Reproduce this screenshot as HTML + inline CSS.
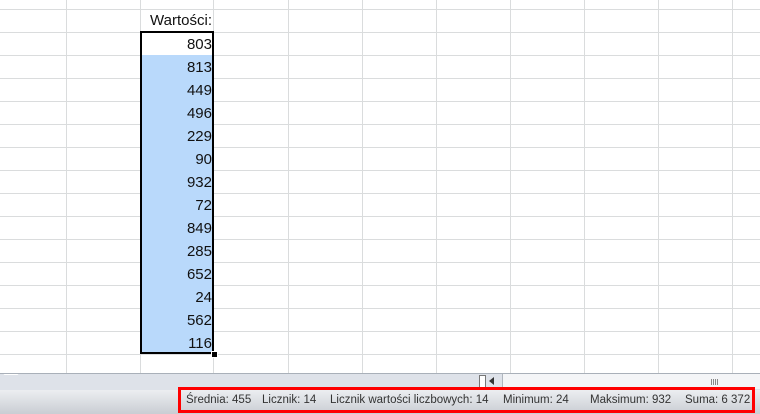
<!DOCTYPE html>
<html><head><style>
body{margin:0;width:760px;height:414px;overflow:hidden;background:#fff;position:relative;font-family:"Liberation Sans",sans-serif}
.v{position:absolute;top:0;height:373px;width:1px;background:#dadcdd}
.h{position:absolute;left:0;width:760px;height:1px;background:#dadcdd}
.c{position:absolute;left:142px;width:70px;height:23px;text-align:right;font-size:15px;line-height:24px;color:#111}
#sel{position:absolute;left:140px;top:31px;width:70px;height:319px;border:2px solid #000}
#tabs{position:absolute;left:0;top:373px;width:760px;height:16px;background:#dee2e9;border-top:1px solid #a9b0b9;border-bottom:1px solid #a0a8b2}
#status{position:absolute;left:0;top:390px;width:760px;height:24px;background:linear-gradient(#eceef1,#c9cdd3)}
#box{position:absolute;left:178px;top:387px;width:571px;height:20px;border:3px solid #f00;font-size:11.5px;color:#333;line-height:20px;white-space:nowrap}
#box span{position:absolute;top:0}
.bar{position:absolute;top:5px;width:1px;height:6px;background:#888}
</style></head><body>
<div class="v" style="left:66px"></div><div class="v" style="left:140px"></div><div class="v" style="left:213px"></div><div class="v" style="left:288px"></div><div class="v" style="left:362px"></div><div class="v" style="left:436px"></div><div class="v" style="left:510px"></div><div class="v" style="left:584px"></div><div class="v" style="left:658px"></div><div class="v" style="left:732px"></div>
<div class="h" style="top:9px"></div><div class="h" style="top:32px"></div><div class="h" style="top:55px"></div><div class="h" style="top:78px"></div><div class="h" style="top:101px"></div><div class="h" style="top:124px"></div><div class="h" style="top:147px"></div><div class="h" style="top:170px"></div><div class="h" style="top:193px"></div><div class="h" style="top:216px"></div><div class="h" style="top:239px"></div><div class="h" style="top:262px"></div><div class="h" style="top:285px"></div><div class="h" style="top:308px"></div><div class="h" style="top:331px"></div><div class="h" style="top:354px"></div>
<div style="position:absolute;left:142px;top:55px;width:70px;height:297px;background:#b9d9fb"></div>
<div style="position:absolute;left:142px;top:33px;width:70px;height:22px;background:#fff"></div>
<div style="position:absolute;left:140px;top:10px;width:74px;text-align:right;font-size:15px;line-height:22px;color:#111;padding-right:2px;box-sizing:border-box">Wartości:</div>
<div class="c" style="top:33px">803</div>
<div class="c" style="top:56px">813</div>
<div class="c" style="top:79px">449</div>
<div class="c" style="top:102px">496</div>
<div class="c" style="top:125px">229</div>
<div class="c" style="top:148px">90</div>
<div class="c" style="top:171px">932</div>
<div class="c" style="top:194px">72</div>
<div class="c" style="top:217px">849</div>
<div class="c" style="top:240px">285</div>
<div class="c" style="top:263px">652</div>
<div class="c" style="top:286px">24</div>
<div class="c" style="top:309px">562</div>
<div class="c" style="top:332px">116</div>
<div id="sel"></div>
<div style="position:absolute;left:211px;top:351px;width:5px;height:5px;background:#000;border:1px solid #fff"></div>
<div id="tabs">
<div style="position:absolute;left:0;top:0;width:14px;height:8px;border-top:1px solid #fff;transform:skewX(-45deg)"></div>
<div style="position:absolute;left:479px;top:1px;width:5px;height:11px;border:1px solid #777;background:#fff"></div>
<div style="position:absolute;left:489px;top:3px;width:0;height:0;border-top:4px solid transparent;border-bottom:4px solid transparent;border-right:5px solid #333"></div>
<div style="position:absolute;left:502px;top:0;width:258px;height:15px;background:#f4f5f7;border-left:1px solid #b0b6be"></div>
<div class="bar" style="left:711px"></div><div class="bar" style="left:713px"></div><div class="bar" style="left:715px"></div><div class="bar" style="left:717px"></div>
</div>
<div id="status"></div>
<div id="box">
<span style="left:5px">Średnia: 455</span>
<span style="left:81px">Licznik: 14</span>
<span style="left:149px">Licznik wartości liczbowych: 14</span>
<span style="left:322px">Minimum: 24</span>
<span style="left:409px">Maksimum: 932</span>
<span style="left:504px">Suma: 6 372</span>
</div>
</body></html>
